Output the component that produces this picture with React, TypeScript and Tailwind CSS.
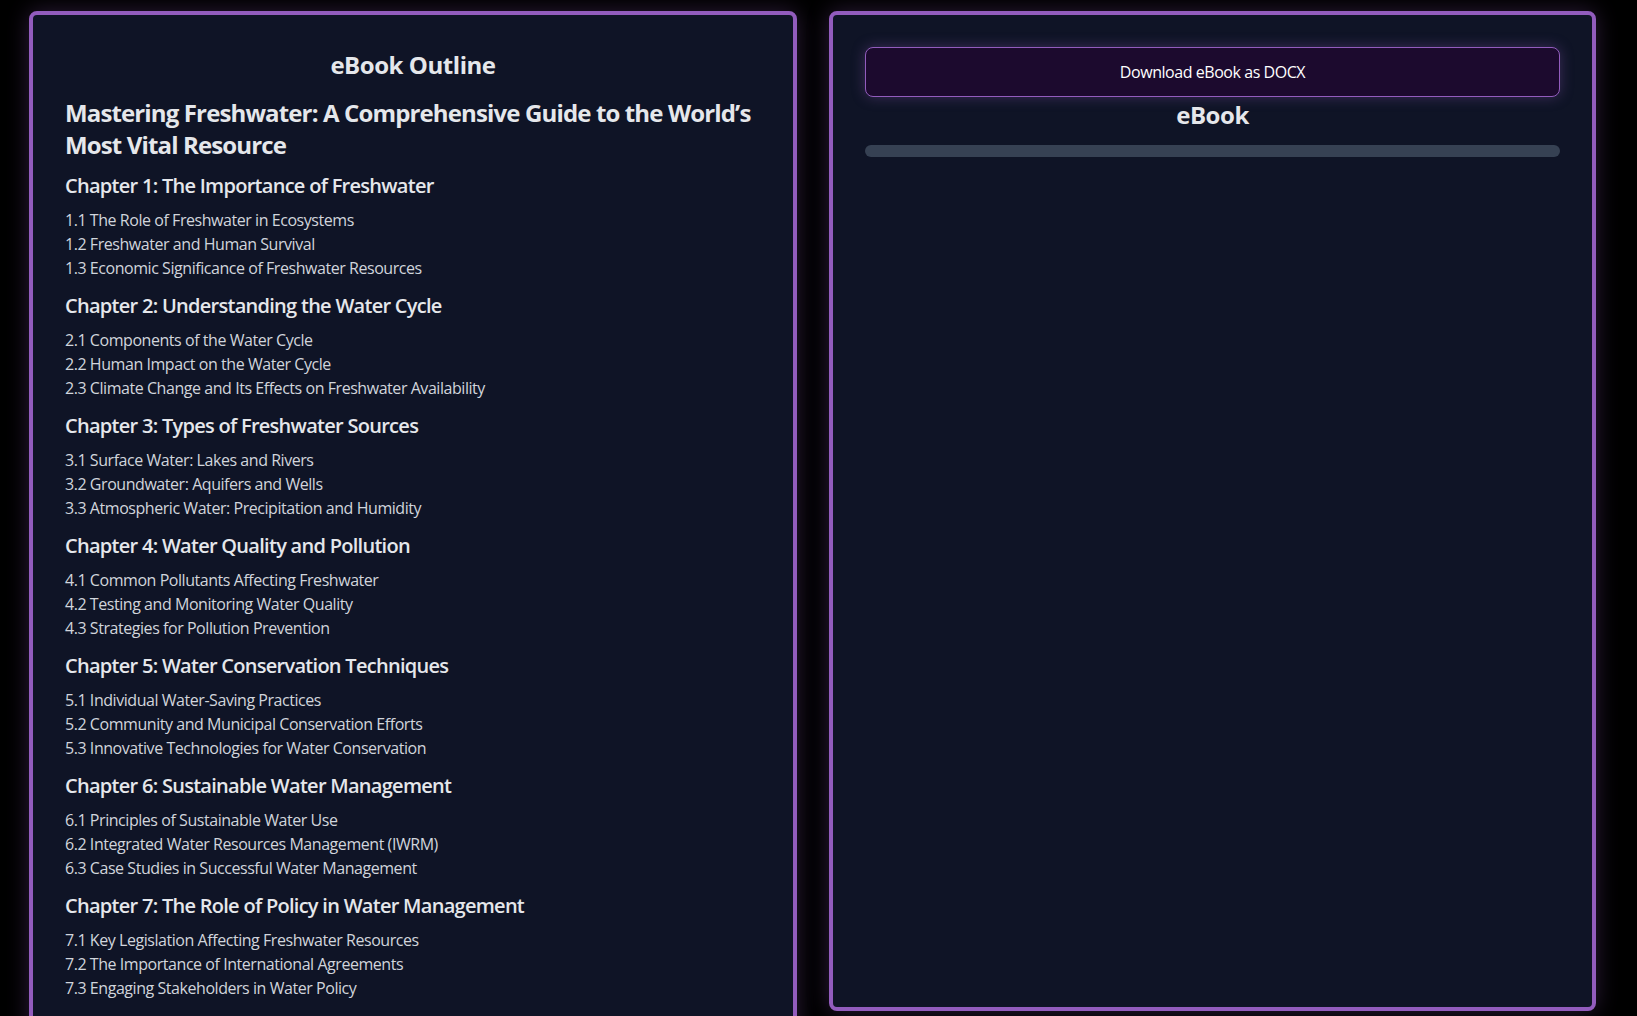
import React from "react";

const outline = [
  {
    title: "Chapter 1: The Importance of Freshwater",
    items: [
      "1.1 The Role of Freshwater in Ecosystems",
      "1.2 Freshwater and Human Survival",
      "1.3 Economic Significance of Freshwater Resources",
    ],
  },
  {
    title: "Chapter 2: Understanding the Water Cycle",
    items: [
      "2.1 Components of the Water Cycle",
      "2.2 Human Impact on the Water Cycle",
      "2.3 Climate Change and Its Effects on Freshwater Availability",
    ],
  },
  {
    title: "Chapter 3: Types of Freshwater Sources",
    items: [
      "3.1 Surface Water: Lakes and Rivers",
      "3.2 Groundwater: Aquifers and Wells",
      "3.3 Atmospheric Water: Precipitation and Humidity",
    ],
  },
  {
    title: "Chapter 4: Water Quality and Pollution",
    items: [
      "4.1 Common Pollutants Affecting Freshwater",
      "4.2 Testing and Monitoring Water Quality",
      "4.3 Strategies for Pollution Prevention",
    ],
  },
  {
    title: "Chapter 5: Water Conservation Techniques",
    items: [
      "5.1 Individual Water-Saving Practices",
      "5.2 Community and Municipal Conservation Efforts",
      "5.3 Innovative Technologies for Water Conservation",
    ],
  },
  {
    title: "Chapter 6: Sustainable Water Management",
    items: [
      "6.1 Principles of Sustainable Water Use",
      "6.2 Integrated Water Resources Management (IWRM)",
      "6.3 Case Studies in Successful Water Management",
    ],
  },
  {
    title: "Chapter 7: The Role of Policy in Water Management",
    items: [
      "7.1 Key Legislation Affecting Freshwater Resources",
      "7.2 The Importance of International Agreements",
      "7.3 Engaging Stakeholders in Water Policy",
    ],
  },
];

export default function App() {
  return (
    <div className="min-h-screen bg-black font-['Open_Sans',sans-serif] tracking-[-0.028em] text-gray-300">
      <div className="flex items-start gap-8 pl-[29px] pt-[11px]">
        {/* outline */}
        <div className="w-[768px] flex-shrink-0 rounded-lg border-4 border-[#925cbd] bg-[#0f1426] px-8 pb-8 pt-[34px] shadow-[0_0_22px_rgba(146,92,189,0.3)]">
          <h2 className="mb-4 text-center text-2xl font-bold text-gray-200">eBook Outline</h2>
          <h1 className="mb-[11px] text-2xl font-bold tracking-[-0.036em] text-gray-200">
            Mastering Freshwater: A Comprehensive Guide to the World’s Most Vital Resource
          </h1>
          {outline.map((chapter) => (
            <div key={chapter.title} className="mb-[12px]">
              <h3 className="mb-[8px] text-xl font-semibold tracking-[-0.036em] text-gray-200">
                {chapter.title}
              </h3>
              <ul>
                {chapter.items.map((item) => (
                  <li key={item} className="text-base leading-6">
                    {item}
                  </li>
                ))}
              </ul>
            </div>
          ))}
        </div>

        {/* ebook */}
        <div className="flex h-[1000px] w-[767px] flex-shrink-0 flex-col rounded-lg border-4 border-[#925cbd] bg-[#0f1426] p-8 shadow-[0_0_22px_rgba(146,92,189,0.3)]">
          <button className="w-full rounded-lg border border-[#925cbd] bg-[#1c0a2e] py-3 text-base text-white shadow-[0_0_14px_rgba(146,92,189,0.35)]">
            Download eBook as DOCX
          </button>
          <h2 className="pt-[2px] text-center text-2xl font-bold text-gray-200">eBook</h2>
          <div className="mt-[14px] h-3 w-full rounded-full bg-gray-700"></div>
        </div>
      </div>
    </div>
  );
}
